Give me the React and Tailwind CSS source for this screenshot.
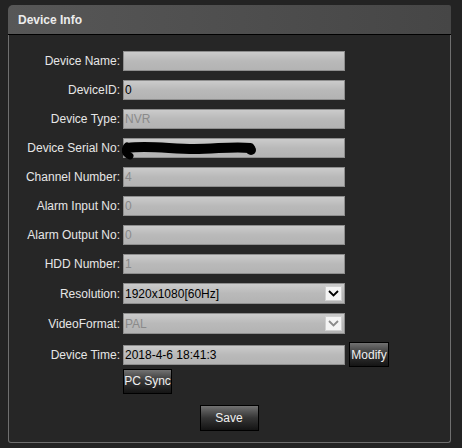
import React from 'react';

const rows = [
    { label: 'Device Name:', value: '', disabled: false },
    { label: 'DeviceID:', value: '0', disabled: false },
    { label: 'Device Type:', value: 'NVR', disabled: true },
    { label: 'Device Serial No:', value: '', disabled: true, redacted: true },
    { label: 'Channel Number:', value: '4', disabled: true },
    { label: 'Alarm Input No:', value: '0', disabled: true },
    { label: 'Alarm Output No:', value: '0', disabled: true },
    { label: 'HDD Number:', value: '1', disabled: true },
];

const fieldBase =
    'h-[20px] w-[222px] border border-[#8e8e8e] bg-gradient-to-b from-[#cbcbcb] via-[#b9b9b9] to-[#b3b3b3] px-[1px] text-[12px] leading-[18px]';

const btnBase =
    'border border-black bg-gradient-to-b from-[#727272] via-[#353535] to-[#141414] text-[12px] text-[#f0f0f0] leading-none';

function Chevron({ color }) {
    return (
        <svg width="11" height="7" viewBox="0 0 11 7">
            <path d="M1 1 L5.5 5.5 L10 1" fill="none" stroke={color} strokeWidth="1.8" />
        </svg>
    );
}

function SelectBox({ value, disabled }) {
    return (
        <div className={`${fieldBase} h-[21px] flex items-center justify-between pr-[2px] ${disabled ? 'text-[#8a8a8a]' : 'text-black'}`}>
            <span>{value}</span>
            <div className="w-[17px] h-[15px] bg-[#f4f4f4] border border-[#d0d0d0] flex items-center justify-center">
                <Chevron color={disabled ? '#8a8a8a' : '#000'} />
            </div>
        </div>
    );
}

function Row({ label, children, className = '' }) {
    return (
        <div className={`flex items-center ${className}`}>
            <div className="w-[111px] text-right text-[12px] text-[#e6e6e6]">{label}</div>
            <div className="ml-[3px] flex items-center">{children}</div>
        </div>
    );
}

export default function App() {
    return (
        <div
            className="w-[462px] h-[448px] bg-[#232323] pt-[5px] pl-[8px]"
            style={{ fontFamily: '"Liberation Sans", Arial, sans-serif' }}
        >
            <div className="w-[443px] h-[438px] flex flex-col">
                {/* Header */}
                <div className="h-[30px] rounded-tl-[5px] rounded-tr-[2px] bg-gradient-to-r from-[#575757] to-[#464646] border-b border-black flex items-center pl-[10px]">
                    <span className="text-[12px] font-bold text-[#ececec]">Device Info</span>
                </div>

                {/* Body */}
                <div className="flex-1 bg-[#262626] border-x border-b border-[#6f6f6f] rounded-b-[3px] pt-[16px] flex flex-col">
                    <div className="flex flex-col gap-[9px]">
                        {rows.map(r => (
                            <Row key={r.label} label={r.label}>
                                <div className={`${fieldBase} relative ${r.disabled ? 'text-[#8a8a8a]' : 'text-black'}`}>
                                    {r.value}
                                    {r.redacted && (
                                        <svg className="absolute left-[-2px] top-[1px]" width="140" height="20" viewBox="0 0 140 20">
                                            <path d="M6 8 C 24 5, 50 9, 72 9 S 112 6, 128 8" fill="none" stroke="#000" strokeWidth="10" strokeLinecap="round" />
                                            <path d="M5 6 C 2 10, 3 14, 8 16" fill="none" stroke="#000" strokeWidth="7" strokeLinecap="round" />
                                            <circle cx="129" cy="10" r="5" fill="#000" />
                                        </svg>
                                    )}
                                </div>
                            </Row>
                        ))}
                        <Row label="Resolution:">
                            <SelectBox value="1920x1080[60Hz]" />
                        </Row>
                        <Row label="VideoFormat:">
                            <SelectBox value="PAL" disabled />
                        </Row>
                    </div>

                    <Row label="Device Time:" className="mt-[8px]">
                        <div className={`${fieldBase} text-black`}>2018-4-6 18:41:3</div>
                        <button className={`${btnBase} ml-[4px] w-[40px] h-[25px]`}>Modify</button>
                    </Row>

                    <div className="ml-[114px] mt-[1px]">
                        <button className={`${btnBase} w-[49px] h-[25px]`}>PC Sync</button>
                    </div>

                    <div className="flex justify-center mt-[11px] pr-[1px]">
                        <button className={`${btnBase} w-[59px] h-[26px]`}>Save</button>
                    </div>
                </div>
            </div>
        </div>
    );
}
